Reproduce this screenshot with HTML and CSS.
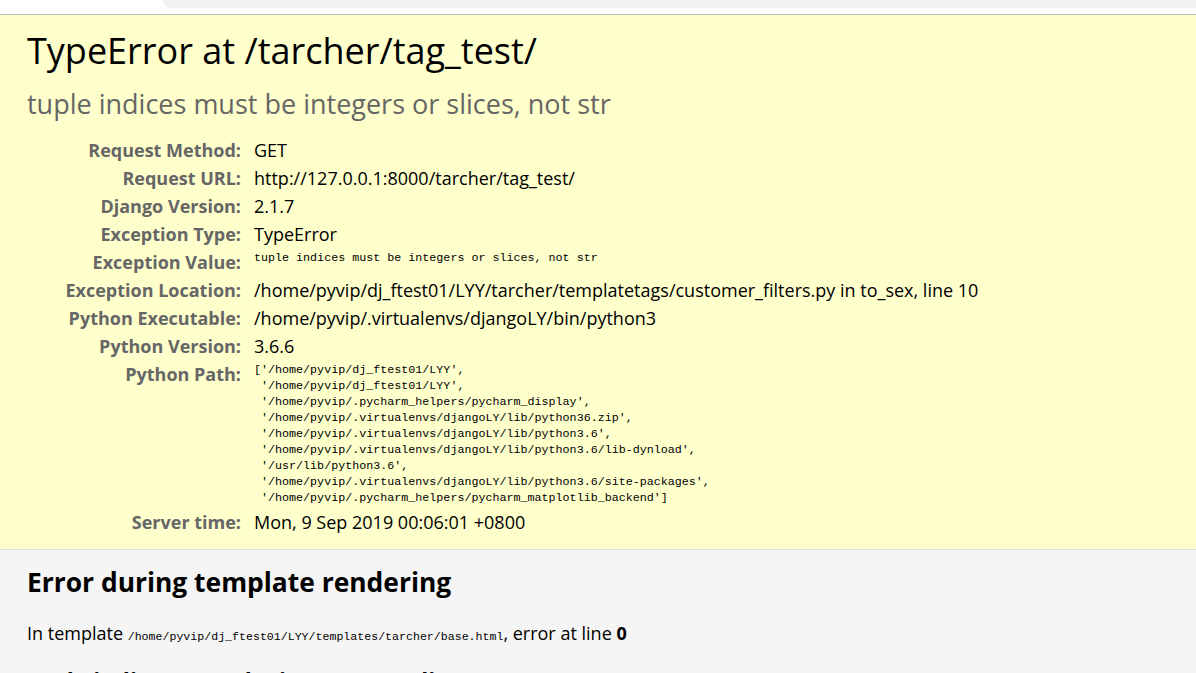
FILE: index.html
```html
<!DOCTYPE html>
<html>
<head>
<meta charset="utf-8">
<title>TypeError at /tarcher/tag_test/</title>
<link rel="stylesheet" href="styles.css">
</head>
<body>
<div class="chrome"><div class="chrome-tab"></div></div>
<div id="summary">
  <h1>TypeError at /tarcher/tag_test/</h1>
  <h2>tuple indices must be integers or slices, not str</h2>
  <table class="meta">
    <tbody>
      <tr><th>Request Method:</th><td>GET</td></tr>
      <tr><th>Request URL:</th><td>http://127.0.0.1:8000/tarcher/tag_test/</td></tr>
      <tr><th>Django Version:</th><td>2.1.7</td></tr>
      <tr><th>Exception Type:</th><td>TypeError</td></tr>
      <tr><th>Exception Value:</th><td><pre class="exc">tuple indices must be integers or slices, not str</pre></td></tr>
      <tr><th>Exception Location:</th><td>/home/pyvip/dj_ftest01/LYY/tarcher/templatetags/customer_filters.py in to_sex, line 10</td></tr>
      <tr><th>Python Executable:</th><td>/home/pyvip/.virtualenvs/djangoLY/bin/python3</td></tr>
      <tr><th>Python Version:</th><td>3.6.6</td></tr>
      <tr><th>Python Path:</th><td><pre class="exc">['/home/pyvip/dj_ftest01/LYY',
 '/home/pyvip/dj_ftest01/LYY',
 '/home/pyvip/.pycharm_helpers/pycharm_display',
 '/home/pyvip/.virtualenvs/djangoLY/lib/python36.zip',
 '/home/pyvip/.virtualenvs/djangoLY/lib/python3.6',
 '/home/pyvip/.virtualenvs/djangoLY/lib/python3.6/lib-dynload',
 '/usr/lib/python3.6',
 '/home/pyvip/.virtualenvs/djangoLY/lib/python3.6/site-packages',
 '/home/pyvip/.pycharm_helpers/pycharm_matplotlib_backend']</pre></td></tr>
      <tr><th>Server time:</th><td>Mon, 9 Sep 2019 00:06:01 +0800</td></tr>
    </tbody>
  </table>
</div>
<div id="template">
  <h2>Error during template rendering</h2>
  <p>In template <code>/home/pyvip/dj_ftest01/LYY/templates/tarcher/base.html</code>, error at line <strong>0</strong></p>
  <h3>tuple indices must be integers or slices, not str</h3>
</div>
</body>
</html>
```
FILE: styles.css
```css
html, body, div, h1, h2, h3, p, pre, table, th, td, code {
  margin: 0;
  padding: 0;
}
body {
  font-family: "Open Sans", "Noto Sans", sans-serif;
  color: #000;
  background: #fff;
  overflow: hidden;
}
.chrome {
  height: 14px;
  background: #fff;
  border-bottom: 1px solid #bcbcbc;
}
.chrome-tab {
  margin-left: 163px;
  height: 8px;
  background: #f1f2f4;
  border-bottom-left-radius: 12px;
}
#summary {
  background: #ffffcc;
  border-bottom: 1px solid #dddddd;
  padding: 13px 27px 13px 27px;
}
#summary h1 {
  font-weight: 400;
  font-size: 36px;
  line-height: 46px;
}
#summary h2 {
  font-weight: 400;
  font-size: 27px;
  line-height: 36px;
  color: #666;
  margin-top: 11.5px;
}
table.meta {
  margin-top: 14.5px;
  border-collapse: collapse;
  font-size: 18px;
}
table.meta th {
  width: 214px;
  text-align: right;
  vertical-align: top;
  color: #666;
  font-weight: 700;
  line-height: 28px;
}
table.meta td {
  vertical-align: top;
  padding-left: 13px;
  line-height: 28px;
}
pre.exc {
  font-family: "Liberation Mono", monospace;
  font-size: 11.7px;
  line-height: 16px;
  padding: 2px 0;
  white-space: pre;
}
#template {
  background: #f5f5f5;
  padding: 14px 27px 0 27px;
  height: 200px;
}
#template h2 {
  font-size: 26.4px;
  line-height: 36px;
  font-weight: 700;
}
#template p {
  font-size: 18px;
  line-height: 28px;
  margin-top: 19px;
}
#template code {
  font-family: "Liberation Mono", monospace;
  font-size: 11.6px;
}
#template h3 {
  font-size: 23px;
  line-height: 30px;
  margin-top: 15px;
  font-weight: 700;
}
```
